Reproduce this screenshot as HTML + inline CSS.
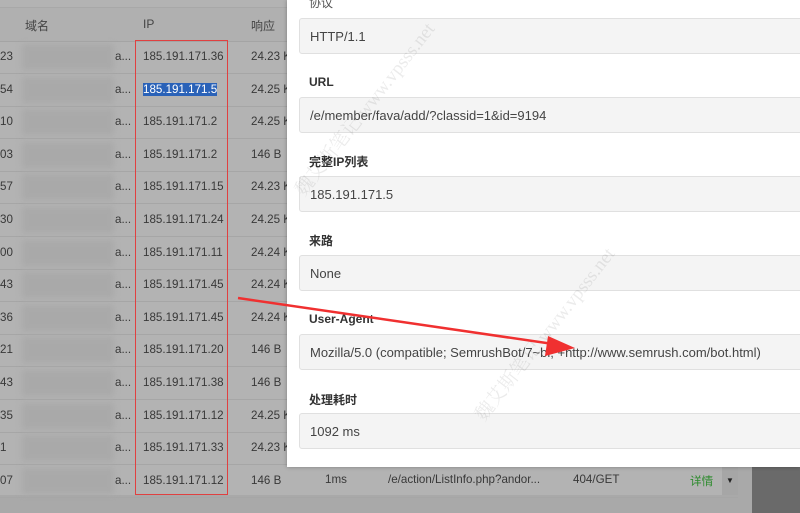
<!DOCTYPE html><html><head><meta charset="utf-8"><style>
body{margin:0;width:800px;height:513px;overflow:hidden;background:#a9a9a9;font-family:"Liberation Sans","Noto Sans CJK SC",sans-serif;position:relative}
.t{position:absolute;left:0;top:0;width:738px;height:495px;background:#b3b3b3}
.hd{position:absolute;left:0;top:7px;width:738px;height:33px;background:#b0b0b0;border-bottom:1px solid #a4a4a4;border-top:1px solid #a8a8a8}
.r{position:absolute;left:0;width:738px;height:32px;border-bottom:1px solid #a6a6a6;font-size:11.6px;color:#383838}
.r span{position:absolute;top:9px}
.blur{position:absolute;left:22px;width:92px;height:26px;top:3px;background:#a9a9a9;filter:blur(3px)}
.m{position:absolute;left:287px;top:0;width:513px;height:467px;background:#fff;box-shadow:0 0 4px rgba(0,0,0,.3);overflow:hidden}
.lb{position:absolute;left:22px;font-size:12px;font-weight:bold;color:#333}
.in{position:absolute;left:12px;width:520px;height:36px;background:#f4f4f4;border:1px solid #e0e0e0;border-radius:3px;box-sizing:border-box;font-size:13px;color:#444;padding:10px 10px}
.wm{position:absolute;font-family:"Liberation Serif","Noto Serif CJK SC",serif;color:rgba(0,0,0,.08);font-size:19px;transform:rotate(-52deg);white-space:nowrap}
</style></head><body>
<div class="t"></div>
<div class="hd"><span style="position:absolute;left:25px;top:9px;font-size:12px;color:#444">域名</span><span style="position:absolute;left:143px;top:9px;font-size:12px;color:#444">IP</span><span style="position:absolute;left:251px;top:9px;font-size:12px;color:#444">响应</span></div>
<div id="rows"></div>
<script>
var ips=["36","5","2","2","15","24","11","45","45","20","38","12","33","12"],
n=["23","54","10","03","57","30","00","43","36","21","43","35","1","07"],
s=["24.23 K","24.25 K","24.25 K","146 B","24.23 K","24.25 K","24.24 K","24.24 K","24.24 K","146 B","146 B","24.25 K","24.23 K","146 B"],h="";
for(var i=0;i<14;i++){var y=41+i*32.6;h+='<div class="r" style="top:'+y+'px"><span style="left:0">'+n[i]+'</span><div class="blur"></div><span style="left:115px">a...</span><span style="left:143px'+(i==1?';background:#2a62b8;color:#fff':'')+'">185.191.171.'+ips[i]+'</span><span style="left:251px">'+s[i]+'</span></div>';}
document.getElementById('rows').innerHTML=h;
</script>
<div class="r" style="top:464px;border:none;width:720px"><span style="left:325px">1ms</span><span style="left:388px">/e/action/ListInfo.php?andor...</span><span style="left:573px">404/GET</span><span style="left:690px;color:#2a8a2a">详情</span></div>
<div style="position:absolute;left:722px;top:467px;width:16px;height:28px;background:#a6a6a6;font-size:8px;color:#222;text-align:center;line-height:28px">▼</div>
<div style="position:absolute;left:752px;top:467px;width:48px;height:46px;background:#6a6a6a"></div>
<div style="position:absolute;left:135px;top:40px;width:93px;height:455px;border:1px solid #e04040;box-sizing:border-box"></div>
<div class="m">
<div class="lb" style="top:-6px;font-weight:normal;color:#555">协议</div>
<div class="in" style="top:18px">HTTP/1.1</div>
<div class="lb" style="top:75px">URL</div>
<div class="in" style="top:97px">/e/member/fava/add/?classid=1&amp;id=9194</div>
<div class="lb" style="top:153px">完整IP列表</div>
<div class="in" style="top:176px">185.191.171.5</div>
<div class="lb" style="top:232px">来路</div>
<div class="in" style="top:255px">None</div>
<div class="lb" style="top:312px">User-Agent</div>
<div class="in" style="top:334px">Mozilla/5.0 (compatible; SemrushBot/7~bl; +http://www.semrush.com/bot.html)</div>
<div class="lb" style="top:391px">处理耗时</div>
<div class="in" style="top:413px">1092 ms</div>
<div class="wm" style="left:-30px;top:95px">魏艾斯笔记 www.vpsss.net</div>
<div class="wm" style="left:150px;top:320px">魏艾斯笔记 www.vpsss.net</div>
</div>
<svg style="position:absolute;left:0;top:0" width="800" height="513"><line x1="238" y1="298" x2="560" y2="345" stroke="#f03030" stroke-width="2.5"/><polygon points="575,348 548,336 545,356" fill="#f03030"/></svg>
</body></html>
